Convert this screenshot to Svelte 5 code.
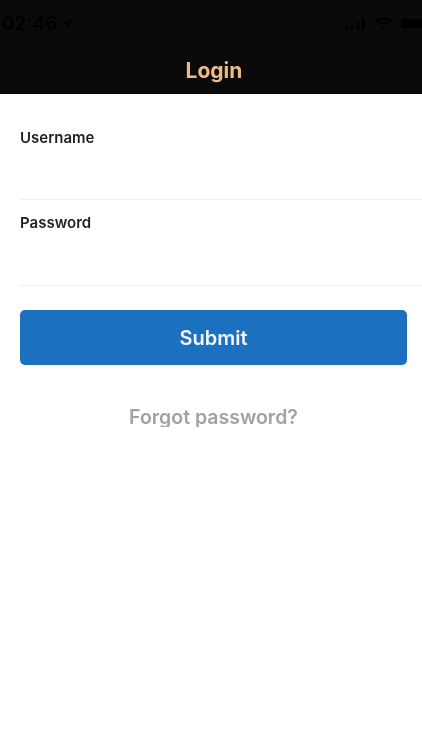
<script>
  let username = $state('');
  let password = $state('');
</script>

<div class="screen">
  <header class="nav">
    <div class="status">
      <div class="status-left">
        <span class="time">02:46</span>
        <svg class="arrow" width="10" height="10" viewBox="0 0 10 10"><path d="M9.5 .5 L.5 4.6 L4.6 5.4 L5.4 9.5 Z" fill="#000" /></svg>
      </div>
      <div class="status-right">
        <svg width="21" height="12" viewBox="0 0 21 12" fill="#000">
          <rect x="0" y="9" width="3.5" height="3" rx=".5" />
          <rect x="5.5" y="7" width="3.5" height="5" rx=".5" />
          <rect x="11" y="4" width="3.5" height="8" rx=".5" />
          <rect x="16.5" y="0" width="3.5" height="12" rx=".5" />
        </svg>
        <svg width="19" height="13" viewBox="0 0 18 13" fill="none" stroke="#000" stroke-width="2">
          <path d="M1 4.5 C5.5 .5 12.5 .5 17 4.5" />
          <path d="M4 7.5 C6.5 5.3 11.5 5.3 14 7.5" />
          <path d="M9 12.5 L6.7 10 C8 9 10 9 11.3 10 Z" fill="#000" stroke="none" />
        </svg>
        <span class="battery"></span>
      </div>
    </div>
    <h1>Login</h1>
  </header>

  <form class="form" onsubmit={(e) => e.preventDefault()}>
    <label class="field">
      <span>Username</span>
      <input type="text" bind:value={username} />
    </label>
    <label class="field">
      <span>Password</span>
      <input type="password" bind:value={password} />
    </label>
    <button type="submit" class="submit">Submit</button>
    <button type="button" class="forgot">Forgot password?</button>
  </form>
</div>

<style>
  :global(body) {
    margin: 0;
    background: #fff;
  }

  .screen {
    width: 422px;
    height: 750px;
    overflow: hidden;
    background: #fff;
    font-family: Inter, "Liberation Sans", sans-serif;
    filter: blur(0.45px);
  }

  .nav {
    height: 94px;
    box-sizing: border-box;
    background: #0a0a0a;
    border-bottom: 1px solid #000;
    display: flex;
    flex-direction: column;
  }

  .status {
    flex: none;
    height: 48px;
    box-sizing: border-box;
    padding: 14px 0 0 2px;
    display: flex;
    justify-content: space-between;
    align-items: flex-start;
  }

  .status-left {
    display: flex;
    align-items: center;
    gap: 6px;
  }

  .time {
    color: #000;
    font-size: 19px;
    font-weight: 600;
    line-height: 20px;
  }

  .status-right {
    display: flex;
    align-items: center;
    gap: 8px;
    margin-top: 3px;
  }

  .battery {
    width: 21px;
    height: 9px;
    background: #000;
    border-radius: 2px 0 0 2px;
  }

  h1 {
    margin: 0;
    padding-left: 6px;
    text-align: center;
    color: #efb986;
    font-size: 21px;
    font-weight: 700;
    line-height: 45px;
  }

  .form {
    display: flex;
    flex-direction: column;
    padding-top: 34px;
  }

  .field {
    display: flex;
    flex-direction: column;
    height: 71px;
    margin-left: 20px;
    border-bottom: 1px solid #f0f0f0;
    margin-bottom: 13px;
  }

  .field + .field {
    height: 72px;
  }

  .field span {
    color: #222;
    font-size: 15px;
    font-weight: 600;
    line-height: 20px;
  }

  .field input {
    flex: 1;
    min-height: 0;
    border: 0;
    outline: 0;
    padding: 0;
    background: none;
    font: inherit;
  }

  .submit {
    margin: 11px 15px 0 20px;
    height: 55px;
    border: 0;
    border-radius: 5px;
    background: #1b70bf;
    color: #f2f7fc;
    font: inherit;
    font-size: 20px;
    font-weight: 600;
  }

  .forgot {
    margin-top: 41px;
    height: 21px;
    padding: 0 0 0 5px;
    border: 0;
    background: none;
    overflow: hidden;
    text-align: center;
    color: #a2a2a4;
    font: inherit;
    font-size: 19.5px;
    font-weight: 600;
    line-height: 22px;
  }
</style>
